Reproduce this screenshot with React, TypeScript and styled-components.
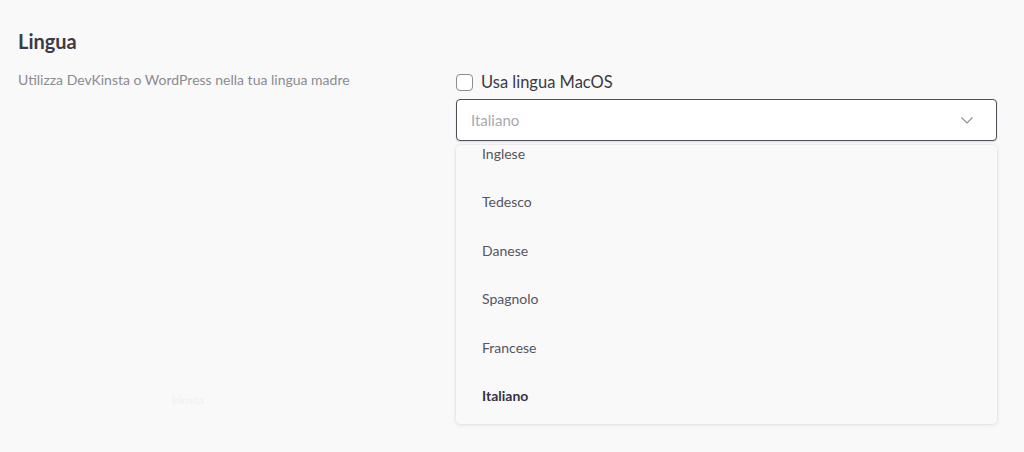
import { useEffect, useRef, useState } from "react";
import styled, { createGlobalStyle } from "styled-components";

const GlobalStyle = createGlobalStyle`
  html, body {
    margin: 0;
    padding: 0;
    background-color: #f9f9f9;
  }
  body {
    font-family: "Lato", "Noto Sans", Arial, sans-serif;
    -webkit-font-smoothing: antialiased;
  }
`;

const Page = styled.div`
  position: relative;
  width: 1024px;
  height: 452px;
  box-sizing: border-box;
  padding: 28px 27px 0 18px;
  background-color: #f9f9f9;
  overflow: hidden;
`;

const Title = styled.h2`
  margin: 0;
  font-size: 20px;
  line-height: 27px;
  font-weight: 700;
  color: #3b3b47;
`;

const Row = styled.div`
  display: grid;
  grid-template-columns: 438px 1fr;
  margin-top: 13px;
`;

const Description = styled.p`
  margin: 3px 0 0;
  font-size: 14px;
  line-height: 18px;
  color: #8b8b92;
`;

const Controls = styled.div`
  display: flex;
  flex-direction: column;
`;

const CheckRow = styled.label`
  display: flex;
  align-items: center;
  gap: 8px;
  height: 28px;
  font-size: 16.5px;
  color: #3a3a44;
  cursor: pointer;
`;

const Box = styled.span`
  width: 15px;
  height: 15px;
  border: 1px solid #8c8c92;
  border-radius: 4px;
  background-color: #fff;
`;

const SelectBox = styled.div`
  display: flex;
  align-items: center;
  justify-content: space-between;
  height: 40px;
  margin-top: 3px;
  padding: 0 23px 0 14px;
  border: 1px solid #4f4f58;
  border-radius: 4px;
  background-color: #fff;
  box-shadow: 0 1px 2px rgba(0, 0, 0, 0.12);
  font-size: 15px;
  color: #a9a9af;
`;

const Menu = styled.div`
  height: 279px;
  margin-top: 4px;
  overflow-y: auto;
  border-radius: 5px;
  background-color: #f9f9fa;
  box-shadow: 0 1px 4px rgba(60, 60, 120, 0.12), 0 0 0 1px rgba(90, 90, 140, 0.05);
  scrollbar-width: none;
  &::-webkit-scrollbar {
    display: none;
  }
`;

const List = styled.ul`
  list-style: none;
  margin: 0;
  padding: 4px 0;
`;

const Item = styled.li<{ $active?: boolean }>`
  display: flex;
  align-items: center;
  height: 48.5px;
  padding-left: 26px;
  font-size: 14px;
  font-weight: ${(p) => (p.$active ? 700 : 400)};
  color: ${(p) => (p.$active ? "#34343f" : "#55555f")};
  cursor: pointer;
`;

const Watermark = styled.span`
  position: absolute;
  left: 172px;
  top: 392px;
  font-size: 12px;
  font-weight: 700;
  color: #f2f2f2;
  pointer-events: none;
`;

const languages = ["Inglese", "Tedesco", "Danese", "Spagnolo", "Francese", "Italiano"];

export default function App() {
  const [selected] = useState("Italiano");
  const menuRef = useRef<HTMLDivElement>(null);

  useEffect(() => {
    if (menuRef.current) menuRef.current.scrollTop = 20;
  }, []);

  return (
    <Page>
      <GlobalStyle />
      <Title>Lingua</Title>
      <Row>
        <Description>Utilizza DevKinsta o WordPress nella tua lingua madre</Description>
        <Controls>
          <CheckRow>
            <Box />
            Usa lingua MacOS
          </CheckRow>
          <SelectBox>
            <span>{selected}</span>
            <svg width="12" height="7" viewBox="0 0 12 7" fill="none">
              <path d="M0.5 0.5l5.5 5.5L11.5 0.5" stroke="#8e8e96" strokeWidth="1.1" />
            </svg>
          </SelectBox>
          <Menu ref={menuRef}>
            <List>
              {languages.map((l) => (
                <Item key={l} $active={l === selected}>
                  {l}
                </Item>
              ))}
            </List>
          </Menu>
        </Controls>
      </Row>
      <Watermark>kinsta</Watermark>
    </Page>
  );
}
